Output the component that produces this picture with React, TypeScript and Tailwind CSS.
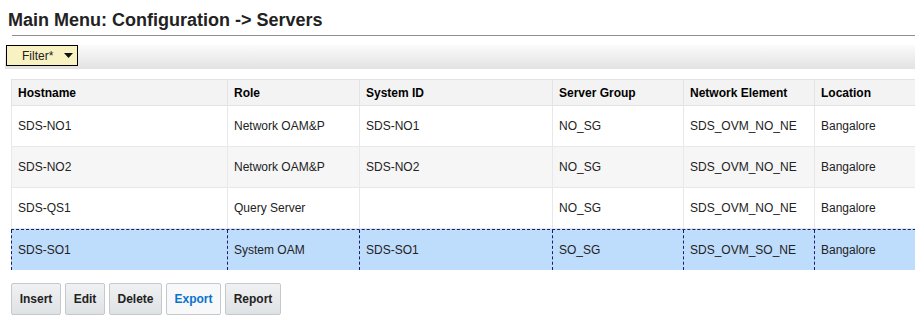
import React from "react";

const cols = [216, 132, 193, 131, 131, 120];
const headers = ["Hostname", "Role", "System ID", "Server Group", "Network Element", "Location"];
const rows = [
  ["SDS-NO1", "Network OAM&P", "SDS-NO1", "NO_SG", "SDS_OVM_NO_NE", "Bangalore"],
  ["SDS-NO2", "Network OAM&P", "SDS-NO2", "NO_SG", "SDS_OVM_NO_NE", "Bangalore"],
  ["SDS-QS1", "Query Server", "", "NO_SG", "SDS_OVM_NO_NE", "Bangalore"],
  ["SDS-SO1", "System OAM", "SDS-SO1", "SO_SG", "SDS_OVM_SO_NE", "Bangalore"],
];

export default function App() {
  return (
    <div
      className="w-[915px] h-[324px] overflow-hidden bg-white text-[#222]"
      style={{ fontFamily: '"Liberation Sans", Arial, sans-serif' }}
    >
      <div className="pl-[8px] pt-[9px] text-[18px] leading-[22px] font-bold text-[#222]">
        Main Menu: Configuration -&gt; Servers
      </div>
      <div className="ml-[12px] mt-[4px] h-px bg-[#8e8e8e]" />
      <div className="ml-[5px] mt-[9px] h-[24px] bg-gradient-to-b from-[#fbfbfb] to-[#e2e2e2] flex items-start">
        <div className="ml-[1px] h-[21px] w-[72px] border border-black bg-[#f8f1c2] flex items-center text-[12px] text-[#222]">
          <span className="ml-[15px]">Filter*</span>
          <svg className="ml-[11px]" width="9" height="5" viewBox="0 0 9 5">
            <polygon points="0,0 9,0 4.5,5" fill="#111" />
          </svg>
        </div>
      </div>
      <div className="ml-[11px] mt-[10px] w-[1000px] text-[12px]">
        <div className="flex h-[27px] border-t border-b border-[#e3e3e3] bg-[#f3f3f3] font-bold text-black">
          {headers.map((h, i) => (
            <div
              key={i}
              className="flex items-center px-[6px] border-l border-[#e3e3e3]"
              style={{ width: cols[i] }}
            >
              {h}
            </div>
          ))}
        </div>
        {rows.map((r, ri) => {
          const sel = ri === 3;
          const bg = sel ? "bg-[#bedcfb]" : ri === 1 ? "bg-[#f6f6f6]" : "bg-white";
          return (
            <div
              key={ri}
              className={
                "flex h-[41px] " +
                bg +
                (sel ? " border-t border-dashed border-[#1c1c6c]" : " border-b border-[#e8e8e8]")
              }
            >
              {r.map((c, ci) => (
                <div
                  key={ci}
                  className={
                    "flex items-center px-[6px] border-l " +
                    (sel ? "border-dashed border-[#1c1c6c]" : "border-[#e8e8e8]")
                  }
                  style={{ width: cols[ci] }}
                >
                  {c}
                </div>
              ))}
            </div>
          );
        })}
      </div>
      <div className="ml-[11px] mt-[13px] flex gap-[4px] text-[12px] font-bold">
        {[
          ["Insert", 50],
          ["Edit", 40],
          ["Delete", 53],
          ["Export", 55],
          ["Report", 56],
        ].map(([t, w]) => {
          const ex = t === "Export";
          return (
            <div
              key={t as string}
              className={
                "h-[32px] flex items-center justify-center rounded-[2px] border border-[#c6c9cc] " +
                (ex
                  ? "bg-[#f6f8f9] text-[#0a72cc]"
                  : "bg-gradient-to-b from-[#eff1f2] to-[#dfe2e5] text-[#222]")
              }
              style={{ width: w as number }}
            >
              {t}
            </div>
          );
        })}
      </div>
    </div>
  );
}
